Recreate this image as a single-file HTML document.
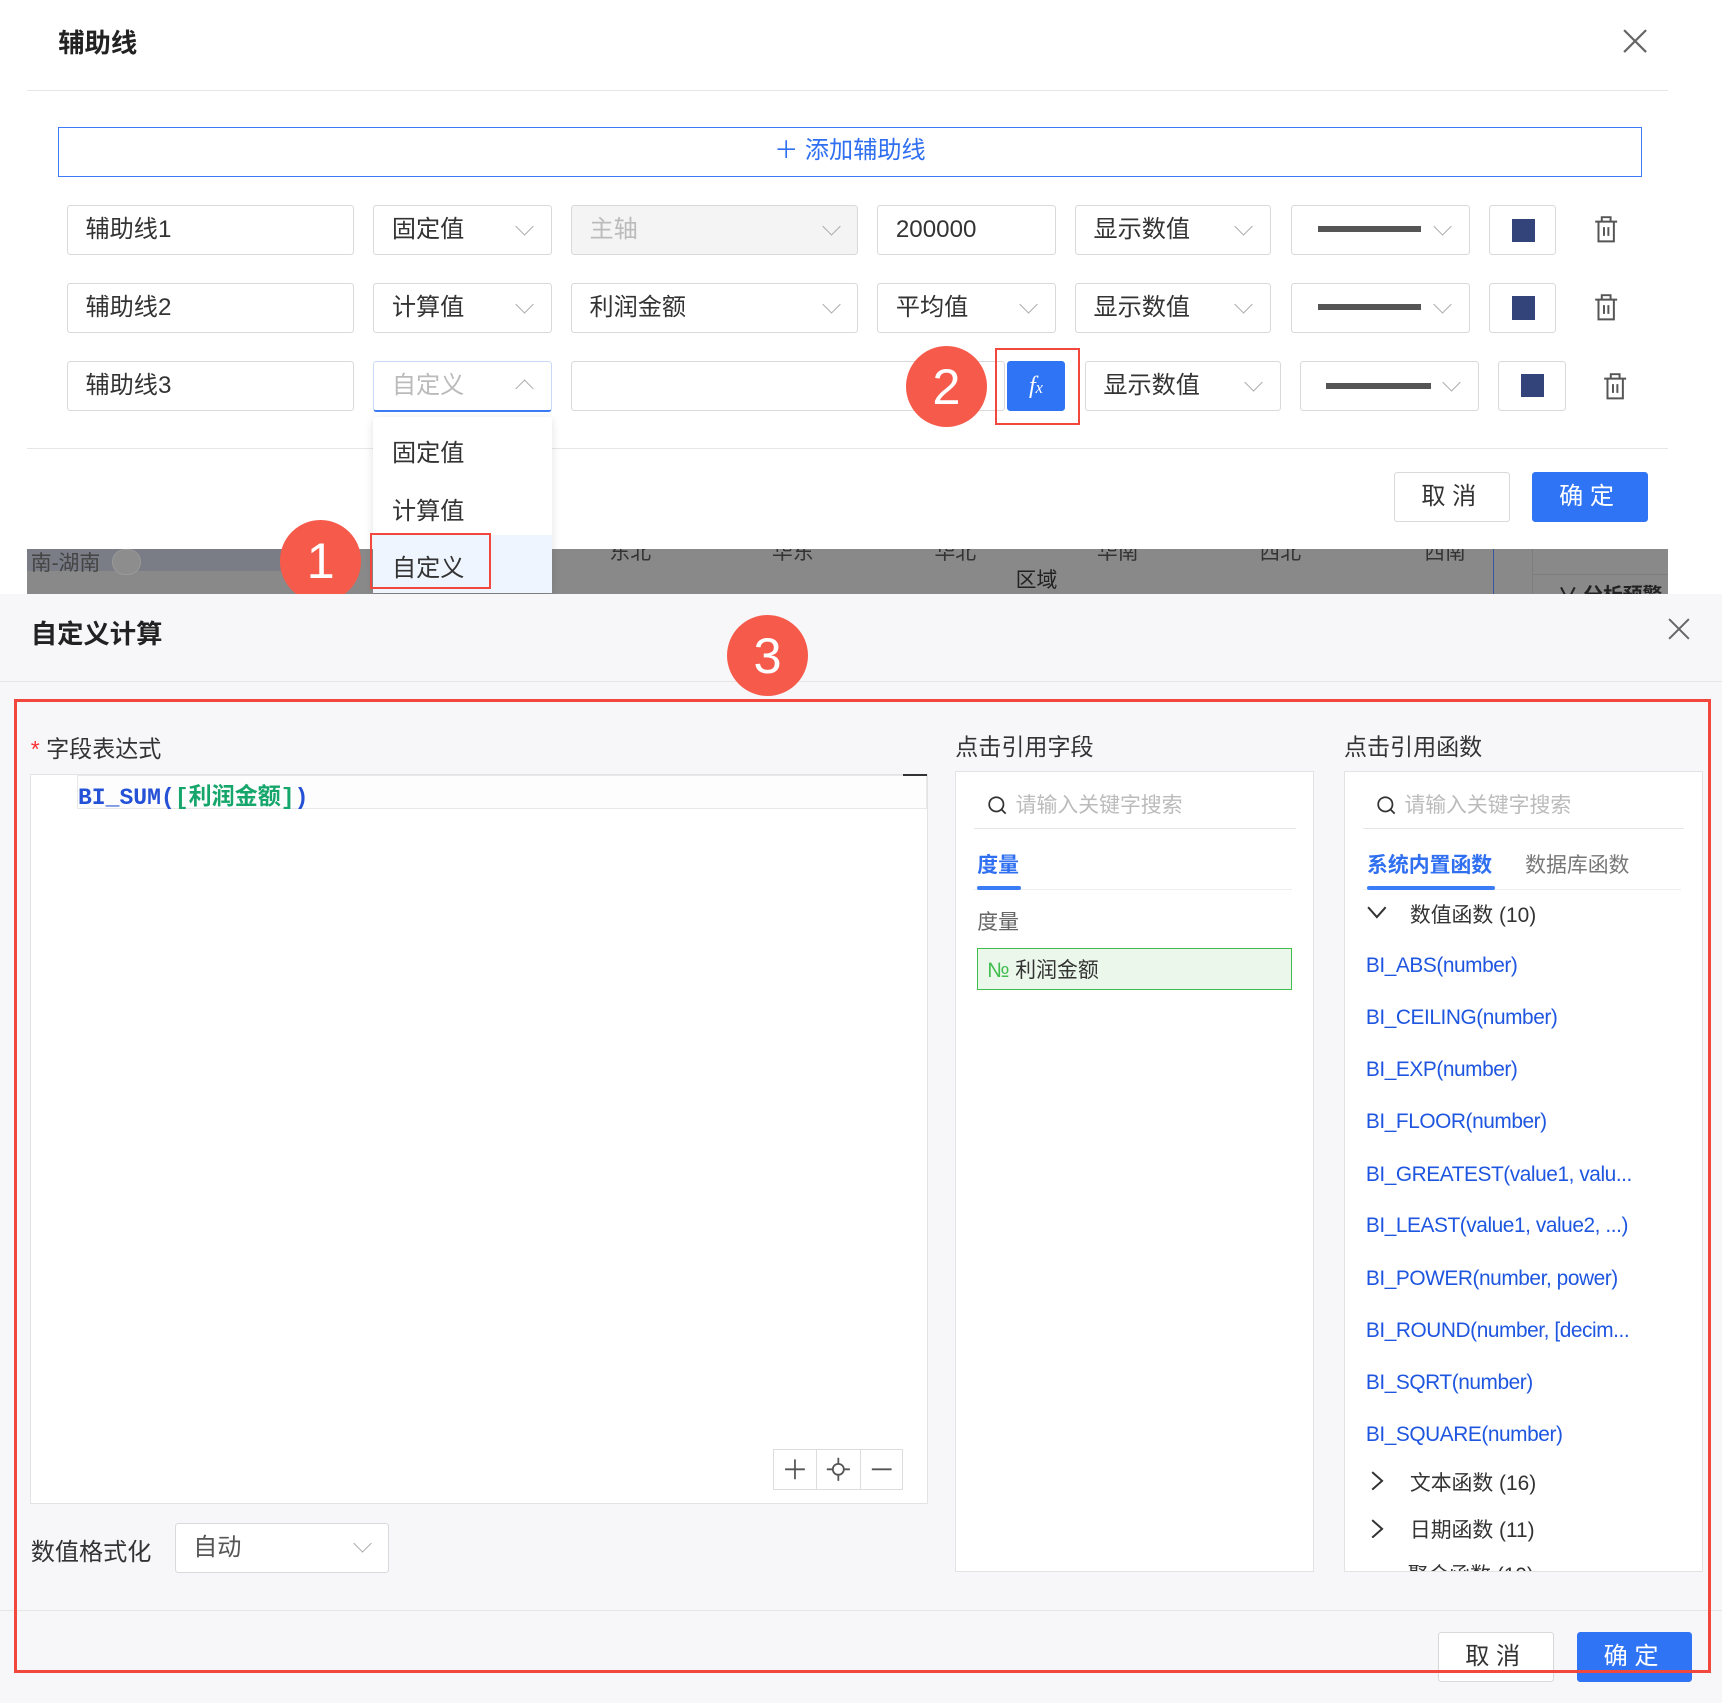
<!DOCTYPE html>
<html><head><meta charset="utf-8">
<style>
html,body{margin:0;padding:0;background:#fff;overflow:hidden;}
body{width:1722px;height:1700px;}
#w{position:absolute;left:0;top:0;width:1570px;height:1550px;zoom:1.098;font-family:"Liberation Sans","Noto Sans CJK SC",sans-serif;color:#333;}
.a{position:absolute;box-sizing:border-box;}
.box{position:absolute;box-sizing:border-box;border:1px solid #d9d9d9;border-radius:3px;background:#fff;font-size:22px;line-height:43px;padding-left:16px;color:#333;}
.chev{position:absolute;width:11px;height:11px;border-right:1.5px solid #aaa;border-bottom:1.5px solid #aaa;transform:rotate(45deg);}
.t{position:absolute;white-space:nowrap;}
.fn{position:absolute;left:1244px;font-size:19px;color:#1f56e0;white-space:nowrap;letter-spacing:-0.4px;}
.circ{position:absolute;width:74px;height:74px;border-radius:50%;background:#f65a4b;color:#fff;font-size:46px;line-height:74px;text-align:center;}
.sq{position:absolute;width:21px;height:21px;background:#33447a;}
</style></head><body><div id="w">
<div class="a" style="left:0;top:0;width:1570px;height:500px;background:#fff"></div>
<div class="t" style="left:53px;top:19px;font-size:24px;font-weight:bold;color:#222">辅助线</div>
<svg class="a" style="left:1478px;top:26px" width="22" height="22"><path d="M1 1L21 21M21 1L1 21" stroke="#666" stroke-width="2"/></svg>
<div class="a" style="left:25px;top:82px;width:1494px;height:1px;background:#e6e6e6"></div>
<div class="a" style="left:53px;top:116px;width:1442px;height:45px;border:1.5px solid #3b7cf6;color:#2f6ff0;font-size:22px;text-align:center;line-height:42px">＋ 添加辅助线</div>

<div class="box" style="left:61px;top:187px;width:261px;height:45px">辅助线1</div>
<div class="box" style="left:340px;top:187px;width:163px;height:45px">固定值</div><div class="chev" style="left:472px;top:200px"></div>
<div class="box" style="left:520px;top:187px;width:261px;height:45px;background:#f4f4f4;color:#bbb">主轴</div><div class="chev" style="left:751px;top:200px"></div>
<div class="box" style="left:799px;top:187px;width:163px;height:45px">200000</div>
<div class="box" style="left:979px;top:187px;width:179px;height:45px">显示数值</div><div class="chev" style="left:1127px;top:200px"></div>
<div class="box" style="left:1176px;top:187px;width:163px;height:45px"></div><div class="a" style="left:1200px;top:206px;width:94px;height:5px;background:#555"></div><div class="chev" style="left:1308px;top:200px"></div>
<div class="box" style="left:1356px;top:187px;width:61px;height:45px"></div><div class="sq" style="left:1377px;top:199px"></div>
<svg class="a" style="left:1451px;top:196px" width="24" height="26"><path d="M2 6H22M8 6V2H16V6M5 6V24H19V6M10 11V19M14 11V19" fill="none" stroke="#555" stroke-width="1.8"/></svg>

<div class="box" style="left:61px;top:258px;width:261px;height:45px">辅助线2</div>
<div class="box" style="left:340px;top:258px;width:163px;height:45px">计算值</div><div class="chev" style="left:472px;top:271px"></div>
<div class="box" style="left:520px;top:258px;width:261px;height:45px">利润金额</div><div class="chev" style="left:751px;top:271px"></div>
<div class="box" style="left:799px;top:258px;width:163px;height:45px">平均值</div><div class="chev" style="left:931px;top:271px"></div>
<div class="box" style="left:979px;top:258px;width:179px;height:45px">显示数值</div><div class="chev" style="left:1127px;top:271px"></div>
<div class="box" style="left:1176px;top:258px;width:163px;height:45px"></div><div class="a" style="left:1200px;top:277px;width:94px;height:5px;background:#555"></div><div class="chev" style="left:1308px;top:271px"></div>
<div class="box" style="left:1356px;top:258px;width:61px;height:45px"></div><div class="sq" style="left:1377px;top:270px"></div>
<svg class="a" style="left:1451px;top:267px" width="24" height="26"><path d="M2 6H22M8 6V2H16V6M5 6V24H19V6M10 11V19M14 11V19" fill="none" stroke="#555" stroke-width="1.8"/></svg>

<div class="box" style="left:61px;top:329px;width:261px;height:45px">辅助线3</div>
<div class="box" style="left:340px;top:329px;width:163px;height:46px;color:#bbb;border-color:#c9d8f5;border-bottom:2px solid #3b7cf6">自定义</div><div class="chev" style="left:472px;top:348px;transform:rotate(225deg)"></div>
<div class="box" style="left:520px;top:329px;width:395px;height:45px"></div>
<div class="a" style="left:917px;top:329px;width:53px;height:45px;background:#2f74f5;border-radius:3px;color:#fff;font-style:italic;font-family:'Liberation Serif',serif;font-size:22px;text-align:center;line-height:45px">f<span style="font-size:15px">x</span></div>
<div class="a" style="left:906px;top:317px;width:78px;height:70px;border:2.5px solid #f2473c"></div>
<div class="box" style="left:988px;top:329px;width:179px;height:45px">显示数值</div><div class="chev" style="left:1136px;top:342px"></div>
<div class="box" style="left:1184px;top:329px;width:163px;height:45px"></div><div class="a" style="left:1208px;top:349px;width:95px;height:5px;background:#555"></div><div class="chev" style="left:1316px;top:342px"></div>
<div class="box" style="left:1364px;top:329px;width:62px;height:45px"></div><div class="sq" style="left:1385px;top:341px"></div>
<svg class="a" style="left:1459px;top:339px" width="24" height="26"><path d="M2 6H22M8 6V2H16V6M5 6V24H19V6M10 11V19M14 11V19" fill="none" stroke="#555" stroke-width="1.8"/></svg>
<div class="circ" style="left:825px;top:315px">2</div>

<div class="a" style="left:25px;top:408px;width:1494px;height:1px;background:#e6e6e6"></div>
<div class="a" style="left:1270px;top:430px;width:105px;height:45px;border:1px solid #d9d9d9;border-radius:3px;font-size:22px;text-align:center;line-height:43px;letter-spacing:6px">取消</div>
<div class="a" style="left:1395px;top:430px;width:106px;height:45px;background:#2f74f5;border-radius:3px;color:#fff;font-size:22px;text-align:center;line-height:45px;letter-spacing:6px">确定</div>

<div class="a" style="left:25px;top:500px;width:1494px;height:41px;background:#898989;overflow:hidden">
 <div class="a" style="left:0;top:0;width:300px;height:20px;background:#7b7d86"></div>
 <div class="t" style="left:3px;top:-2px;font-size:19px;color:#444">南-湖南</div>
 <div class="a" style="left:77px;top:0;width:26px;height:24px;border:1px solid #999;border-radius:12px;background:#8d8d8d"></div>
 <div class="t" style="left:530px;top:-12px;font-size:19px;color:#333">东北</div>
 <div class="t" style="left:678px;top:-12px;font-size:19px;color:#333">华东</div>
 <div class="t" style="left:826px;top:-12px;font-size:19px;color:#333">华北</div>
 <div class="t" style="left:974px;top:-12px;font-size:19px;color:#333">华南</div>
 <div class="t" style="left:1122px;top:-12px;font-size:19px;color:#333">西北</div>
 <div class="t" style="left:1272px;top:-12px;font-size:19px;color:#333">西南</div>
 <div class="t" style="left:900px;top:14px;font-size:19px;color:#222">区域</div>
 <div class="a" style="left:1335px;top:0;width:1px;height:41px;background:#3a55a0"></div>
 <div class="a" style="left:1370px;top:0;width:1px;height:41px;background:#7d7d7d"></div>
 <div class="a" style="left:1370px;top:23px;width:124px;height:1px;background:#7d7d7d"></div>
 <div class="t" style="left:1394px;top:27px;font-size:18px;font-weight:bold;color:#222">∨ 分析预警</div>
</div>

<div class="a" style="left:340px;top:380px;width:163px;height:160px;background:#fff;box-shadow:0 2px 8px rgba(0,0,0,.12);border-radius:3px"></div>
<div class="t" style="left:357px;top:394px;font-size:22px">固定值</div>
<div class="t" style="left:357px;top:447px;font-size:22px">计算值</div>
<div class="a" style="left:340px;top:487px;width:163px;height:53px;background:#eef5fe"></div>
<div class="t" style="left:357px;top:499px;font-size:22px">自定义</div>
<div class="a" style="left:337px;top:485px;width:110px;height:51px;border:2.5px solid #f2473c"></div>
<div class="circ" style="left:255px;top:474px">1</div>

<div class="a" style="left:0;top:541px;width:1570px;height:1010px;background:#f7f7f9"></div>
<div class="t" style="left:28px;top:557px;font-size:24px;font-weight:bold;color:#222">自定义计算</div>
<svg class="a" style="left:1519px;top:563px" width="20" height="20"><path d="M1 1L19 19M19 1L1 19" stroke="#666" stroke-width="1.8"/></svg>
<div class="a" style="left:0;top:620px;width:1570px;height:1px;background:#e6e6e6"></div>
<div class="circ" style="left:662px;top:560px">3</div>

<div class="t" style="left:28px;top:665px;font-size:21px"><span style="color:#f33">*</span> 字段表达式</div>
<div class="a" style="left:27px;top:705px;width:818px;height:665px;background:#fff;border:1px solid #e3e3e3"></div>
<div class="a" style="left:70px;top:706px;width:774px;height:31px;border:1px solid #e8e8e8;background:#fdfdfd"></div>
<div class="a" style="left:822px;top:705px;width:22px;height:2px;background:#333"></div>
<div class="t" style="left:71px;top:708px;font-size:21px;font-weight:bold;font-family:'Liberation Mono','Noto Sans CJK SC',monospace;color:#2451d6">BI_SUM(<span style="color:#16a66c">[利润金额]</span>)</div>
<div class="a" style="left:704px;top:1320px;width:118px;height:37px;border:1px solid #ddd;background:#fff"></div>
<div class="a" style="left:743px;top:1320px;width:1px;height:37px;background:#ddd"></div>
<div class="a" style="left:783px;top:1320px;width:1px;height:37px;background:#ddd"></div>
<svg class="a" style="left:704px;top:1320px" width="118" height="37"><path d="M11 18.5H29M20 9.5V27.5" stroke="#555" stroke-width="1.6"/><circle cx="59.5" cy="18.5" r="5" fill="none" stroke="#555" stroke-width="1.6"/><path d="M59.5 8V13.5M59.5 23.5V29M49 18.5H54.5M64.5 18.5H70" stroke="#555" stroke-width="1.6"/><path d="M90 18.5H108" stroke="#555" stroke-width="1.6"/></svg>
<div class="t" style="left:28px;top:1395px;font-size:22px">数值格式化</div>
<div class="box" style="left:159px;top:1387px;width:195px;height:46px;color:#555">自动</div><div class="chev" style="left:324px;top:1400px"></div>

<div class="t" style="left:870px;top:663px;font-size:21px">点击引用字段</div>
<div class="a" style="left:870px;top:702px;width:327px;height:730px;background:#fff;border:1px solid #e3e3e3"></div>
<svg class="a" style="left:899px;top:724px" width="20" height="20"><circle cx="8.5" cy="8.5" r="6.5" fill="none" stroke="#333" stroke-width="1.6"/><path d="M13 13L17 17" stroke="#333" stroke-width="1.6"/></svg>
<div class="t" style="left:925px;top:719px;font-size:19px;color:#bbb">请输入关键字搜索</div>
<div class="a" style="left:887px;top:754px;width:293px;height:1px;background:#e6e6e6"></div>
<div class="t" style="left:890px;top:773px;font-size:19px;font-weight:bold;color:#2f6ff0">度量</div>
<div class="a" style="left:887px;top:810px;width:290px;height:1px;background:#eee"></div>
<div class="a" style="left:890px;top:807px;width:40px;height:4px;border-radius:2px;background:#3b7cf6"></div>
<div class="t" style="left:890px;top:825px;font-size:19px;color:#666">度量</div>
<div class="a" style="left:890px;top:863px;width:287px;height:39px;background:#ebf7ea;border:1.5px solid #3fbd4d"></div>
<div class="t" style="left:899px;top:869px;font-size:19px"><span style="color:#3fbd4d">№</span> 利润金额</div>

<div class="t" style="left:1224px;top:663px;font-size:21px">点击引用函数</div>
<div class="a" style="left:1224px;top:702px;width:327px;height:730px;background:#fff;border:1px solid #e3e3e3;overflow:hidden">
 <div class="t" style="left:57px;top:717px;font-size:19px">聚合函数 (10)</div>
</div>
<svg class="a" style="left:1253px;top:724px" width="20" height="20"><circle cx="8.5" cy="8.5" r="6.5" fill="none" stroke="#333" stroke-width="1.6"/><path d="M13 13L17 17" stroke="#333" stroke-width="1.6"/></svg>
<div class="t" style="left:1279px;top:719px;font-size:19px;color:#bbb">请输入关键字搜索</div>
<div class="a" style="left:1241px;top:754px;width:293px;height:1px;background:#e6e6e6"></div>
<div class="t" style="left:1245px;top:773px;font-size:19px;font-weight:bold;color:#2f6ff0">系统内置函数</div>
<div class="t" style="left:1389px;top:773px;font-size:19px;color:#777">数据库函数</div>
<div class="a" style="left:1241px;top:810px;width:290px;height:1px;background:#eee"></div>
<div class="a" style="left:1245px;top:807px;width:117px;height:4px;border-radius:2px;background:#3b7cf6"></div>
<svg class="a" style="left:1245px;top:824px" width="18" height="14"><path d="M1 2L9 11L17 2" fill="none" stroke="#333" stroke-width="1.8"/></svg>
<div class="t" style="left:1284px;top:819px;font-size:19px">数值函数 (10)</div>
<div class="fn" style="top:869px">BI_ABS(number)</div>
<div class="fn" style="top:916px">BI_CEILING(number)</div>
<div class="fn" style="top:964px">BI_EXP(number)</div>
<div class="fn" style="top:1011px">BI_FLOOR(number)</div>
<div class="fn" style="top:1059px">BI_GREATEST(value1, valu...</div>
<div class="fn" style="top:1106px">BI_LEAST(value1, value2, ...)</div>
<div class="fn" style="top:1154px">BI_POWER(number, power)</div>
<div class="fn" style="top:1201px">BI_ROUND(number, [decim...</div>
<div class="fn" style="top:1249px">BI_SQRT(number)</div>
<div class="fn" style="top:1296px">BI_SQUARE(number)</div>
<svg class="a" style="left:1248px;top:1340px" width="14" height="18"><path d="M2 1L11 9L2 17" fill="none" stroke="#333" stroke-width="1.8"/></svg>
<div class="t" style="left:1284px;top:1336px;font-size:19px">文本函数 (16)</div>
<svg class="a" style="left:1248px;top:1383px" width="14" height="18"><path d="M2 1L11 9L2 17" fill="none" stroke="#333" stroke-width="1.8"/></svg>
<div class="t" style="left:1284px;top:1379px;font-size:19px">日期函数 (11)</div>

<div class="a" style="left:0;top:1466px;width:1570px;height:1px;background:#e6e6e6"></div>
<div class="a" style="left:1310px;top:1486px;width:105px;height:46px;border:1px solid #d9d9d9;border-radius:3px;background:#fff;font-size:22px;text-align:center;line-height:44px;letter-spacing:6px">取消</div>
<div class="a" style="left:1436px;top:1486px;width:105px;height:46px;background:#2f74f5;border-radius:3px;color:#fff;font-size:22px;text-align:center;line-height:46px;letter-spacing:6px">确定</div>

<div class="a" style="left:13px;top:637px;width:1545px;height:887px;border:3px solid #f2473c"></div>
</div></body></html>
